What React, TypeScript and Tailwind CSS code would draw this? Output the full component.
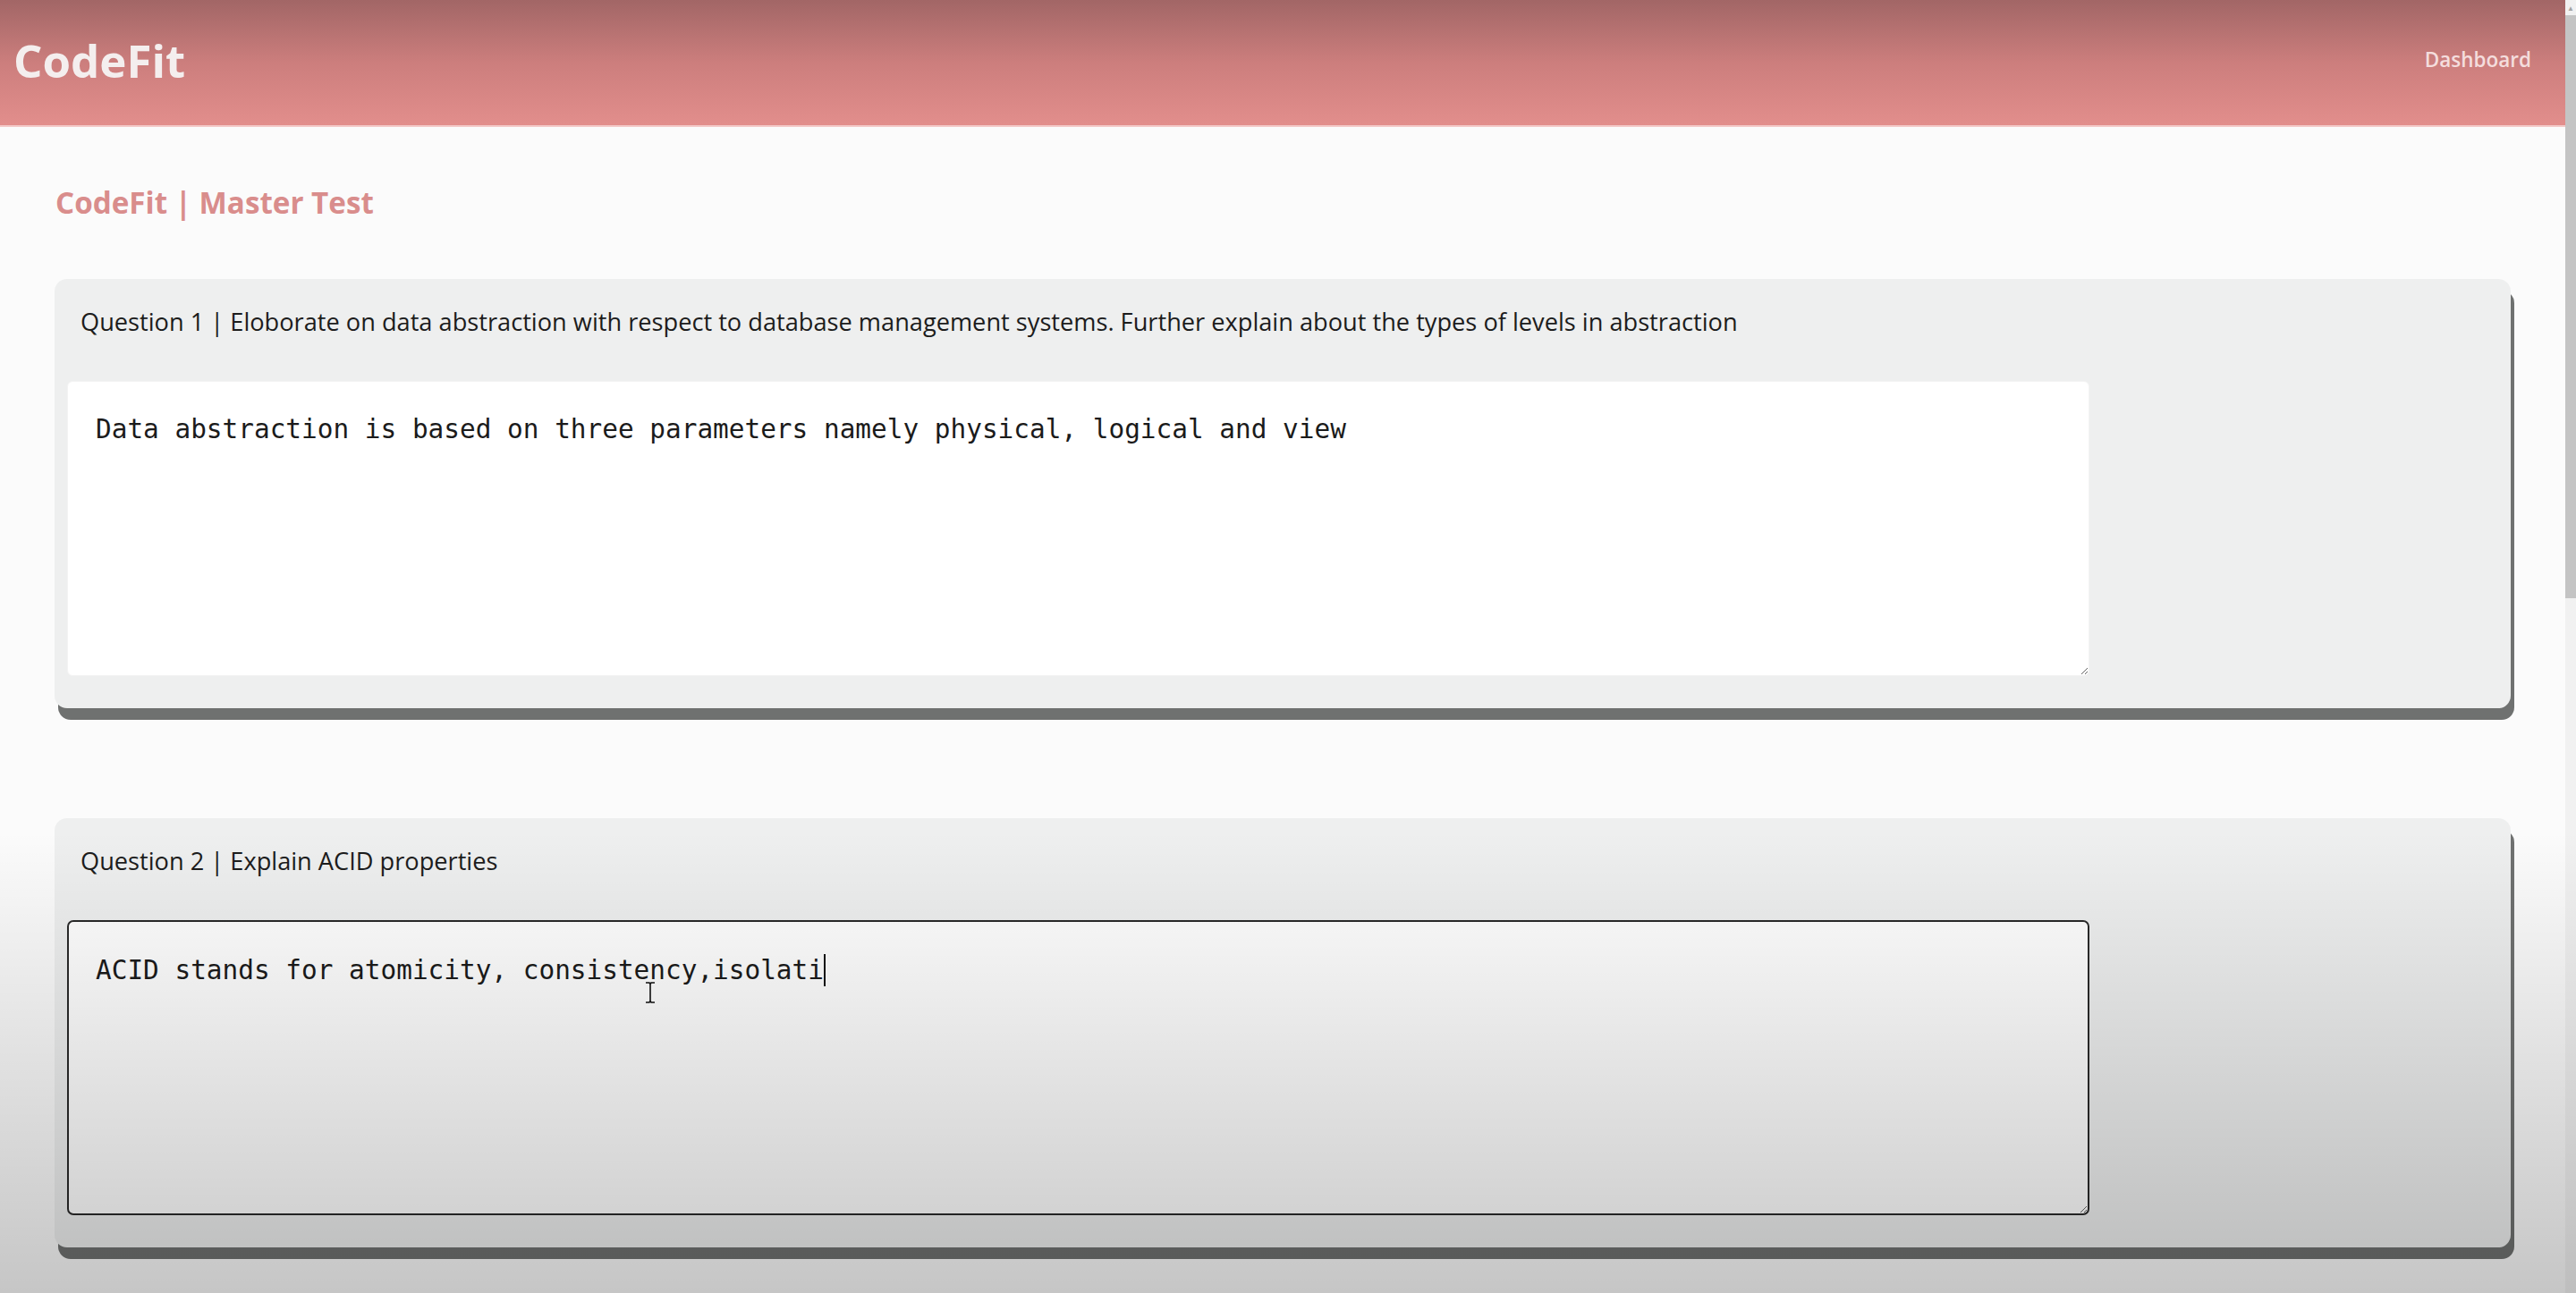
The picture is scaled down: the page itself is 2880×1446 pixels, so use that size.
import React from "react";

function Card({
  question,
  answer,
  focused,
}: {
  question: string;
  answer: string;
  focused?: boolean;
}) {
  return (
    <div className="rounded-[14px] bg-[#eeefef] px-[14px] pt-[30px] pb-[36px] shadow-[4px_13px_0_0_#6f7170]">
      <div className="px-[15px] font-['Open_Sans','Noto_Sans',sans-serif] text-[27.2px] leading-[36px] text-[#1c1c1c]">
        {question}
      </div>
      <div className="relative mt-[48px] w-[2261px]">
        <textarea
          readOnly
          defaultValue={answer}
          className={
            focused
              ? "block h-[330px] w-[2261px] rounded-[7px] border-2 border-[#2a2a2a] bg-white px-[30px] pt-[36px] font-['DejaVu_Sans_Mono',monospace] text-[29.4px] leading-[36px] text-[#1b1b1b] outline-none"
              : "block h-[330px] w-[2261px] rounded-[6px] border border-[#f3f3f3] bg-white px-[31px] pt-[35px] font-['DejaVu_Sans_Mono',monospace] text-[29.4px] leading-[36px] text-[#1b1b1b] outline-none"
          }
        />
        {focused && (
          <>
            <span className="pointer-events-none absolute top-[38px] left-[calc(32px+46ch)] h-[36px] w-[2px] bg-[#111] font-['DejaVu_Sans_Mono',monospace] text-[29.4px]" />
            <svg
              className="pointer-events-none absolute left-[645px] top-[68px]"
              width="14"
              height="26"
              viewBox="0 0 14 26"
            >
              <path
                d="M2 2 h4 l1 1.5 l1 -1.5 h4 M7 3.5 v19 M2 24 h4 l1 -1.5 l1 1.5 h4"
                fill="none"
                stroke="#ffffff"
                strokeWidth="3.5"
              />
              <path
                d="M2 2 h4 l1 1.5 l1 -1.5 h4 M7 3.5 v19 M2 24 h4 l1 -1.5 l1 1.5 h4"
                fill="none"
                stroke="#111111"
                strokeWidth="1.6"
              />
            </svg>
          </>
        )}
      </div>
    </div>
  );
}

export default function App() {
  return (
    <div className="relative flex h-[1446px] w-[2880px] overflow-hidden bg-[#fbfbfb]">
      <div className="flex min-w-0 flex-1 flex-col">
        <header className="flex h-[140px] items-center justify-between bg-linear-to-b from-[#a26666] via-[#cc7e7d] to-[#e28e8c] pr-[38px] pl-[15px] shadow-[0_2px_0_0_#f3c9c8]">
          <div className="mb-[6px] font-['Open_Sans','Noto_Sans',sans-serif] text-[51px] font-bold leading-none text-[#f4eeee]">
            CodeFit
          </div>
          <div className="mb-[6px] font-['Open_Sans','Noto_Sans',sans-serif] text-[22.5px] font-semibold leading-none text-[#f4dddd]">
            Dashboard
          </div>
        </header>
        <main className="flex flex-col px-[61px] pt-[65px]">
          <h1 className="pl-[1px] font-['Open_Sans','Noto_Sans',sans-serif] text-[33.2px] font-bold leading-[44px] text-[#d98d8c]">
            CodeFit | Master Test
          </h1>
          <div className="mt-[63px] flex flex-col gap-[123px]">
            <Card
              question="Question 1 | Eloborate on data abstraction with respect to database management systems. Further explain about the types of levels in abstraction"
              answer="Data abstraction is based on three parameters namely physical, logical and view"
            />
            <Card
              question="Question 2 | Explain ACID properties"
              answer="ACID stands for atomicity, consistency,isolati"
              focused
            />
          </div>
        </main>
      </div>
      <div className="flex w-[12px] flex-col bg-[#f1f1f1]">
        <div className="flex h-[17px] items-center justify-center text-[8px] leading-none text-[#a3a3a3]">
          ▲
        </div>
        <div className="h-[652px] bg-[#c4c4c4]" />
      </div>
      <div className="pointer-events-none absolute inset-x-0 top-[930px] bottom-0 bg-linear-to-b from-transparent to-[rgba(0,0,0,0.21)]" />
    </div>
  );
}
